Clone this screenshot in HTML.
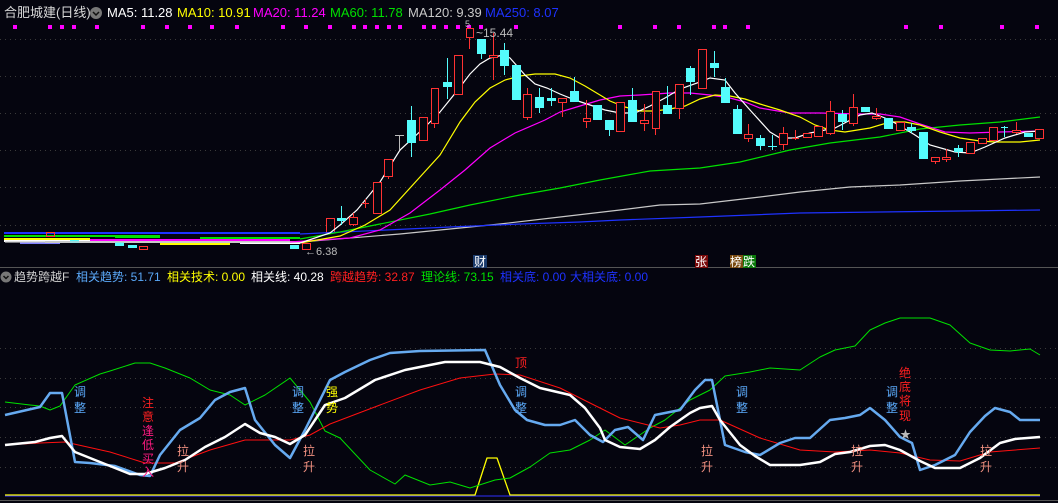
<!DOCTYPE html>
<html><head><meta charset="utf-8"><style>
html,body{margin:0;padding:0;background:#05050f;width:1058px;height:503px;overflow:hidden}
svg{display:block}
text{font-family:"Liberation Sans","Noto Sans CJK SC",sans-serif}
</style></head><body>
<svg width="1058" height="503" viewBox="0 0 1058 503" xmlns="http://www.w3.org/2000/svg">
<rect width="1058" height="503" fill="#05050f"/>
<!-- grid -->
<g stroke="#3a3a3a" stroke-dasharray="1,4" stroke-width="1">
<line x1="0" y1="39.5" x2="1058" y2="39.5"/><line x1="0" y1="76.5" x2="1058" y2="76.5"/>
<line x1="0" y1="113.5" x2="1058" y2="113.5"/><line x1="0" y1="150.5" x2="1058" y2="150.5"/>
<line x1="0" y1="187.5" x2="1058" y2="187.5"/><line x1="0" y1="225.5" x2="1058" y2="225.5"/>
<line x1="0" y1="348.5" x2="1058" y2="348.5"/><line x1="0" y1="378.5" x2="1058" y2="378.5"/>
<line x1="0" y1="407.5" x2="1058" y2="407.5"/><line x1="0" y1="437.5" x2="1058" y2="437.5"/>
<line x1="0" y1="467.5" x2="1058" y2="467.5"/>
</g>
<line x1="0" y1="267.5" x2="1058" y2="267.5" stroke="#555" stroke-width="1"/>
<line x1="0" y1="500.5" x2="1058" y2="500.5" stroke="#555" stroke-width="1"/>

<!-- header top -->
<text x="4" y="17" font-size="13" fill="#d8d8d8">合肥城建(日线)</text>
<circle cx="96" cy="13" r="6" fill="#777"/><path d="M93 12l3 3 3-3" stroke="#111" stroke-width="1.5" fill="none"/>
<text x="107" y="17" font-size="13" fill="#ffffff">MA5: 11.28</text>
<text x="177" y="17" font-size="13" fill="#ffff00">MA10: 10.91</text>
<text x="253" y="17" font-size="13" fill="#ff00ff">MA20: 11.24</text>
<text x="330" y="17" font-size="13" fill="#00e000">MA60: 11.78</text>
<text x="408" y="17" font-size="13" fill="#c8c8c8">MA120: 9.39</text>
<text x="485" y="17" font-size="13" fill="#1e32ff">MA250: 8.07</text>
<!-- magenta dots -->
<g fill="#ff00ff">
<rect x="13" y="25" width="4" height="4"/><rect x="48" y="25" width="4" height="4"/><rect x="60" y="25" width="4" height="4"/><rect x="72" y="25" width="4" height="4"/><rect x="95" y="25" width="4" height="4"/><rect x="141" y="25" width="4" height="4"/><rect x="165" y="25" width="4" height="4"/><rect x="188" y="25" width="4" height="4"/><rect x="210" y="25" width="4" height="4"/><rect x="235" y="25" width="4" height="4"/><rect x="281" y="25" width="4" height="4"/><rect x="304" y="25" width="4" height="4"/><rect x="328" y="25" width="4" height="4"/><rect x="352" y="25" width="4" height="4"/><rect x="363" y="25" width="4" height="4"/><rect x="375" y="25" width="4" height="4"/><rect x="387" y="25" width="4" height="4"/><rect x="398" y="25" width="4" height="4"/><rect x="422" y="25" width="4" height="4"/><rect x="432" y="25" width="4" height="4"/><rect x="444" y="25" width="4" height="4"/><rect x="456" y="25" width="4" height="4"/><rect x="467" y="25" width="4" height="4"/><rect x="479" y="25" width="4" height="4"/><rect x="514" y="25" width="4" height="4"/><rect x="618" y="25" width="4" height="4"/><rect x="653" y="25" width="4" height="4"/><rect x="677" y="25" width="4" height="4"/><rect x="712" y="25" width="4" height="4"/><rect x="723" y="25" width="4" height="4"/><rect x="746" y="25" width="4" height="4"/><rect x="904" y="25" width="4" height="4"/><rect x="939" y="25" width="4" height="4"/><rect x="1000" y="25" width="4" height="4"/><rect x="1035" y="25" width="4" height="4"/>
</g>

<!-- early messy region -->
<g stroke-width="2">
<line x1="4" y1="236" x2="160" y2="236" stroke="#00e000"/>
<line x1="4" y1="239" x2="90" y2="239" stroke="#ffff00"/>
<line x1="4" y1="241" x2="120" y2="241" stroke="#ffffff"/>
<line x1="20" y1="243" x2="60" y2="243" stroke="#8080ff"/>
<line x1="4" y1="233" x2="300" y2="233" stroke="#1e32ff"/>
<line x1="45" y1="242" x2="300" y2="242" stroke="#c8c8c8"/>
<line x1="90" y1="240" x2="290" y2="240" stroke="#ff00ff"/>
<line x1="115" y1="237" x2="160" y2="237" stroke="#00e000"/>
<line x1="160" y1="244" x2="230" y2="244" stroke="#ffff00"/>
<line x1="200" y1="238" x2="300" y2="238" stroke="#00e000"/>
<line x1="240" y1="243" x2="300" y2="243" stroke="#ffffff"/>
</g>
<g fill="#54fcfc"><rect x="70" y="240" width="9" height="3"/><rect x="115" y="242" width="9" height="4"/><rect x="128" y="245" width="9" height="3"/><rect x="290" y="245" width="9" height="4"/></g>
<g fill="none" stroke="#ff3232"><rect x="46.5" y="232.5" width="8" height="4"/><rect x="139.5" y="246.5" width="8" height="3"/><rect x="302.5" y="243.5" width="8" height="6"/><rect x="326.5" y="218.5" width="8" height="14"/></g>
<text x="305" y="255" font-size="11" fill="#bbbbbb">←6.38</text>

<!-- MA lines upper -->
<g fill="none" stroke-width="1.2">
<polyline stroke="#c8c8c8" points="5,242 300,242 400,234 500,224 560,217 620,210 660,205 700,204 760,197 800,192 850,187 900,185 960,181 1040,177"/>
<polyline stroke="#1e32ff" points="300,234 450,227 520,224 580,222 620,220 700,217 800,213 880,212 960,211 1040,210"/>
<polyline stroke="#00e000" points="300,239 340,232 380,224 430,214 470,205 520,195 560,188 600,180 650,171 700,168 740,162 790,150 830,143 880,137 920,129 960,125 1000,122 1040,117"/>
<polyline stroke="#ff00ff" points="290,242 350,238 380,230 410,213 440,190 465,170 490,148 515,133 545,120 560,112 580,106 600,100 620,96 640,95 670,93 690,93 710,95 730,98 745,102 760,108 790,113 820,113 860,114 880,114 900,117 920,124 945,132 970,133 1000,132 1040,131"/>
<polyline stroke="#ffff00" points="300,243 340,236 365,225 390,210 420,177 440,155 460,122 475,102 490,88 505,80 520,76 535,74 555,74 570,78 585,86 600,95 610,101 625,107 640,111 655,111 670,109 685,106 700,99 715,95 730,96 745,99 760,104 780,110 800,117 815,125 830,130 845,132 870,128 890,122 905,122 920,125 940,132 960,138 980,141 995,142 1020,142 1040,140"/>
<polyline stroke="#ffffff" points="300,243 330,233 340,225 357,210 380,182 400,150 425,127 440,112 457,91 470,74 480,64 490,58 503,55 510,58 525,75 535,84 547,88 560,94 575,100 590,105 605,110 620,113 635,113 650,106 665,98 680,89 700,82 710,78 725,80 735,93 750,110 770,132 780,138 795,138 810,133 835,128 860,115 872,113 885,118 895,123 915,135 930,145 955,152 970,153 985,147 1005,138 1025,132 1040,131"/>
</g>

<!-- candles: wicks -->
<g stroke-width="1">
<g stroke="#ff3232">
<line x1="353.5" y1="213" x2="353.5" y2="226"/><line x1="365.5" y1="199" x2="365.5" y2="208"/><line x1="388.5" y1="176" x2="388.5" y2="179"/><line x1="434.5" y1="123" x2="434.5" y2="128"/><line x1="469.5" y1="37" x2="469.5" y2="49"/><line x1="493.5" y1="33" x2="493.5" y2="80"/><line x1="527.5" y1="88" x2="527.5" y2="120"/><line x1="562.5" y1="102" x2="562.5" y2="117"/><line x1="586.5" y1="100" x2="586.5" y2="128"/><line x1="644.5" y1="104" x2="644.5" y2="131"/><line x1="655.5" y1="128" x2="655.5" y2="135"/><line x1="679.5" y1="108" x2="679.5" y2="119"/><line x1="748.5" y1="124" x2="748.5" y2="142"/><line x1="783.5" y1="127" x2="783.5" y2="150"/><line x1="795.5" y1="130" x2="795.5" y2="140"/><line x1="830.5" y1="101" x2="830.5" y2="135"/><line x1="853.5" y1="94" x2="853.5" y2="126"/><line x1="876.5" y1="108" x2="876.5" y2="120"/><line x1="935.5" y1="161" x2="935.5" y2="164"/><line x1="946.5" y1="149" x2="946.5" y2="162"/><line x1="1016.5" y1="122" x2="1016.5" y2="134"/>
</g>
<g stroke="#54fcfc">
<line x1="341.5" y1="206" x2="341.5" y2="225"/><line x1="411.5" y1="106" x2="411.5" y2="157"/><line x1="447.5" y1="58" x2="447.5" y2="99"/><line x1="481.5" y1="54" x2="481.5" y2="59"/><line x1="504.5" y1="43" x2="504.5" y2="75"/><line x1="539.5" y1="88" x2="539.5" y2="113"/><line x1="551.5" y1="88" x2="551.5" y2="106"/><line x1="574.5" y1="77" x2="574.5" y2="91"/><line x1="609.5" y1="130" x2="609.5" y2="136"/><line x1="632.5" y1="88" x2="632.5" y2="100"/><line x1="667.5" y1="86" x2="667.5" y2="105"/><line x1="690.5" y1="66" x2="690.5" y2="95"/><line x1="714.5" y1="51" x2="714.5" y2="77"/><line x1="725.5" y1="78" x2="725.5" y2="87"/><line x1="737.5" y1="105" x2="737.5" y2="109"/><line x1="760.5" y1="135" x2="760.5" y2="150"/><line x1="772.5" y1="135" x2="772.5" y2="150"/><line x1="842.5" y1="110" x2="842.5" y2="130"/><line x1="911.5" y1="123" x2="911.5" y2="133"/><line x1="958.5" y1="145" x2="958.5" y2="157"/><line x1="1004.5" y1="126" x2="1004.5" y2="137"/>
</g>
<line x1="399.5" y1="135" x2="399.5" y2="150" stroke="#bbb"/><line x1="395" y1="135.5" x2="404" y2="135.5" stroke="#bbb"/>
</g>
<!-- red hollow bodies -->
<g fill="#05050f" stroke="#ff3232" stroke-width="1">
<rect x="349.5" y="217.5" width="8" height="7"/><rect x="373.5" y="182.5" width="8" height="31"/><rect x="384.5" y="159.5" width="8" height="17"/><rect x="419.5" y="117.5" width="8" height="23"/><rect x="431.5" y="88.5" width="7" height="35"/><rect x="454.5" y="55.5" width="8" height="39"/><rect x="466.5" y="28.5" width="7" height="9"/><rect x="489.5" y="55.5" width="8" height="2"/><rect x="523.5" y="94.5" width="8" height="23"/><rect x="558.5" y="98.5" width="8" height="4"/><rect x="583.5" y="118.5" width="7" height="3"/><rect x="616.5" y="102.5" width="8" height="29"/><rect x="640.5" y="120.5" width="8" height="3"/><rect x="652.5" y="91.5" width="7" height="37"/><rect x="675.5" y="84.5" width="8" height="24"/><rect x="698.5" y="49.5" width="8" height="39"/><rect x="744.5" y="134.5" width="8" height="4"/><rect x="779.5" y="133.5" width="8" height="11"/><rect x="803.5" y="133.5" width="8" height="4"/><rect x="814.5" y="126.5" width="8" height="10"/><rect x="826.5" y="111.5" width="8" height="22"/><rect x="849.5" y="107.5" width="8" height="16"/><rect x="872.5" y="116.5" width="8" height="2"/><rect x="896.5" y="122.5" width="8" height="8"/><rect x="931.5" y="157.5" width="8" height="4"/><rect x="942.5" y="157.5" width="8" height="2"/><rect x="966.5" y="142.5" width="8" height="11"/><rect x="978.5" y="138.5" width="8" height="5"/><rect x="989.5" y="127.5" width="8" height="13"/><rect x="1012.5" y="130.5" width="8" height="2"/><rect x="1035.5" y="129.5" width="8" height="9"/>
</g>
<line x1="362" y1="203.5" x2="369" y2="203.5" stroke="#ff3232"/><line x1="792" y1="138.5" x2="799" y2="138.5" stroke="#ff3232"/>
<!-- cyan bodies -->
<g fill="#54fcfc">
<rect x="337" y="218" width="9" height="3"/><rect x="407" y="120" width="9" height="23"/><rect x="443" y="82" width="9" height="5"/><rect x="477" y="39" width="9" height="15"/><rect x="500" y="50" width="9" height="16"/><rect x="512" y="65" width="9" height="35"/><rect x="535" y="97" width="9" height="11"/><rect x="547" y="98" width="9" height="3"/><rect x="570" y="91" width="9" height="11"/><rect x="593" y="105" width="9" height="15"/><rect x="605" y="120" width="9" height="10"/><rect x="628" y="100" width="9" height="22"/><rect x="663" y="105" width="9" height="9"/><rect x="686" y="68" width="9" height="14"/><rect x="710" y="63" width="9" height="5"/><rect x="721" y="87" width="9" height="16"/><rect x="733" y="109" width="9" height="25"/><rect x="756" y="138" width="9" height="8"/><rect x="838" y="114" width="9" height="8"/><rect x="861" y="107" width="9" height="5"/><rect x="884" y="118" width="9" height="11"/><rect x="907" y="127" width="9" height="4"/><rect x="919" y="132" width="9" height="27"/><rect x="954" y="148" width="9" height="4"/><rect x="1024" y="133" width="9" height="4"/>
</g>
<g stroke="#54fcfc"><line x1="768" y1="146.5" x2="777" y2="146.5"/><line x1="1001" y1="127.5" x2="1008" y2="127.5"/></g>
<text x="465" y="27" font-size="9" fill="#bbb">5</text>
<text x="476" y="37" font-size="12" fill="#bbbbbb">~15.44</text>

<!-- tags -->
<rect x="473" y="255" width="14" height="13" fill="#1c3c6c"/><text x="474" y="266" font-size="12" fill="#fff">财</text>
<rect x="695" y="255" width="13" height="13" fill="#7a0a0a"/><text x="695" y="266" font-size="12" fill="#fff">张</text>
<rect x="730" y="255" width="13" height="13" fill="#7a4a10"/><text x="730" y="266" font-size="12" fill="#fff">榜</text>
<rect x="743" y="255" width="13" height="13" fill="#0a7a0a"/><text x="743" y="266" font-size="12" fill="#fff">跌</text>

<!-- lower header -->
<circle cx="6" cy="277" r="5.5" fill="#777"/><path d="M3.5 276l2.5 2.5 2.5-2.5" stroke="#111" stroke-width="1.5" fill="none"/>
<text x="14" y="281" font-size="12" fill="#d0d0d0">趋势跨越F</text>
<text x="76" y="281" font-size="12" fill="#5aa8f8">相关趋势: 51.71</text>
<text x="167" y="281" font-size="12" fill="#ffff00">相关技术: 0.00</text>
<text x="251" y="281" font-size="12" fill="#ffffff">相关线: 40.28</text>
<text x="330" y="281" font-size="12" fill="#ff2020">跨越趋势: 32.87</text>
<text x="421" y="281" font-size="12" fill="#00e000">理论线: 73.15</text>
<text x="500" y="281" font-size="12" fill="#1e32ff">相关底: 0.00</text>
<text x="570" y="281" font-size="12" fill="#1e32ff">大相关底: 0.00</text>

<!-- lower lines -->
<g fill="none" stroke-linejoin="round">
<line x1="5" y1="496" x2="1040" y2="496" stroke="#3030ff" stroke-width="1"/>
<polyline stroke="#ffff00" stroke-width="1.3" points="5,495 475,495 487,458 497,458 510,495 1040,495"/>
<polyline stroke="#00e000" stroke-width="1" points="5,402 30,405 40,406 50,410 60,406 75,385 100,374 110,371 135,363 150,363 165,368 190,378 210,390 230,395 245,405 265,395 290,378 310,402 325,431 340,438 370,470 395,484 405,475 430,485 450,482 470,488 495,480 510,478 530,467 550,453 570,450 590,440 605,430 625,445 650,428 665,420 690,400 710,390 725,376 750,372 770,368 800,370 820,357 835,350 855,346 870,330 885,323 900,318 930,318 950,325 970,343 990,350 1010,351 1030,349 1040,355"/>
<polyline stroke="#ff1010" stroke-width="1" points="5,445 40,443 65,442 110,452 145,463 175,463 210,450 245,440 290,440 310,435 330,424 380,405 420,390 460,378 495,374 520,375 560,388 600,408 620,418 660,428 680,425 700,420 720,420 760,438 800,450 835,452 870,450 900,453 930,460 960,461 990,452 1040,448"/>
<polyline stroke="#66aaf0" stroke-width="2.5" points="5,415 40,407 50,393 62,393 75,462 90,463 115,466 140,475 150,476 160,455 180,430 200,418 215,400 230,392 245,388 255,420 275,445 290,458 305,430 330,380 345,372 370,360 390,353 420,351 485,350 500,385 515,410 527,420 545,425 560,425 575,420 590,435 603,442 615,430 628,427 643,440 655,415 680,410 695,390 705,380 712,380 725,445 745,452 760,455 780,443 795,438 810,438 830,420 845,418 860,415 870,408 885,420 900,437 912,443 920,470 935,465 955,455 970,432 985,416 995,408 1010,412 1020,420 1040,420"/>
<polyline stroke="#ffffff" stroke-width="2.5" points="5,445 35,442 50,438 62,436 75,452 100,462 130,474 145,474 165,468 185,460 205,447 225,437 245,424 260,433 275,437 290,444 305,435 325,405 345,398 375,380 405,370 445,362 480,362 500,367 520,378 540,388 570,395 585,408 600,428 605,440 620,447 640,449 655,440 670,427 690,413 700,408 712,406 720,420 740,445 755,456 770,465 800,465 820,462 835,454 850,452 870,446 885,445 900,450 920,461 935,468 960,468 980,458 1000,443 1015,439 1040,437"/>
</g>

<!-- lower labels -->
<g font-size="12">
<text x="74" y="396" fill="#5aa8f8">调</text><text x="74" y="412" fill="#5aa8f8">整</text>
<text x="142" y="407" fill="#ff2020">注</text><text x="142" y="421" fill="#ff2020">意</text><text x="142" y="435" fill="#ff1a80">逢</text><text x="142" y="449" fill="#ff1a80">低</text><text x="142" y="463" fill="#ff1a80">买</text><text x="142" y="476" fill="#ff1a80">入</text>
<text x="177" y="455" fill="#f09080">拉</text><text x="177" y="471" fill="#f09080">升</text>
<text x="292" y="396" fill="#5aa8f8">调</text><text x="292" y="412" fill="#5aa8f8">整</text>
<text x="303" y="455" fill="#f09080">拉</text><text x="303" y="471" fill="#f09080">升</text>
<text x="326" y="396" fill="#ffff00">强</text><text x="326" y="412" fill="#ffff00">势</text>
<text x="515" y="367" fill="#ff2020">顶</text>
<text x="515" y="396" fill="#5aa8f8">调</text><text x="515" y="412" fill="#5aa8f8">整</text>
<text x="701" y="455" fill="#f09080">拉</text><text x="701" y="471" fill="#f09080">升</text>
<text x="736" y="396" fill="#5aa8f8">调</text><text x="736" y="412" fill="#5aa8f8">整</text>
<text x="851" y="455" fill="#f09080">拉</text><text x="851" y="471" fill="#f09080">升</text>
<text x="886" y="396" fill="#5aa8f8">调</text><text x="886" y="412" fill="#5aa8f8">整</text>
<text x="899" y="377" fill="#ff2020">绝</text><text x="899" y="391" fill="#ff2020">底</text><text x="899" y="405" fill="#ff2020">将</text><text x="899" y="420" fill="#ff2020">现</text>
<text x="900" y="438" fill="#bbbbbb" font-size="11">★</text>
<text x="980" y="455" fill="#f09080">拉</text><text x="980" y="471" fill="#f09080">升</text>
</g>
</svg>
</body></html>
